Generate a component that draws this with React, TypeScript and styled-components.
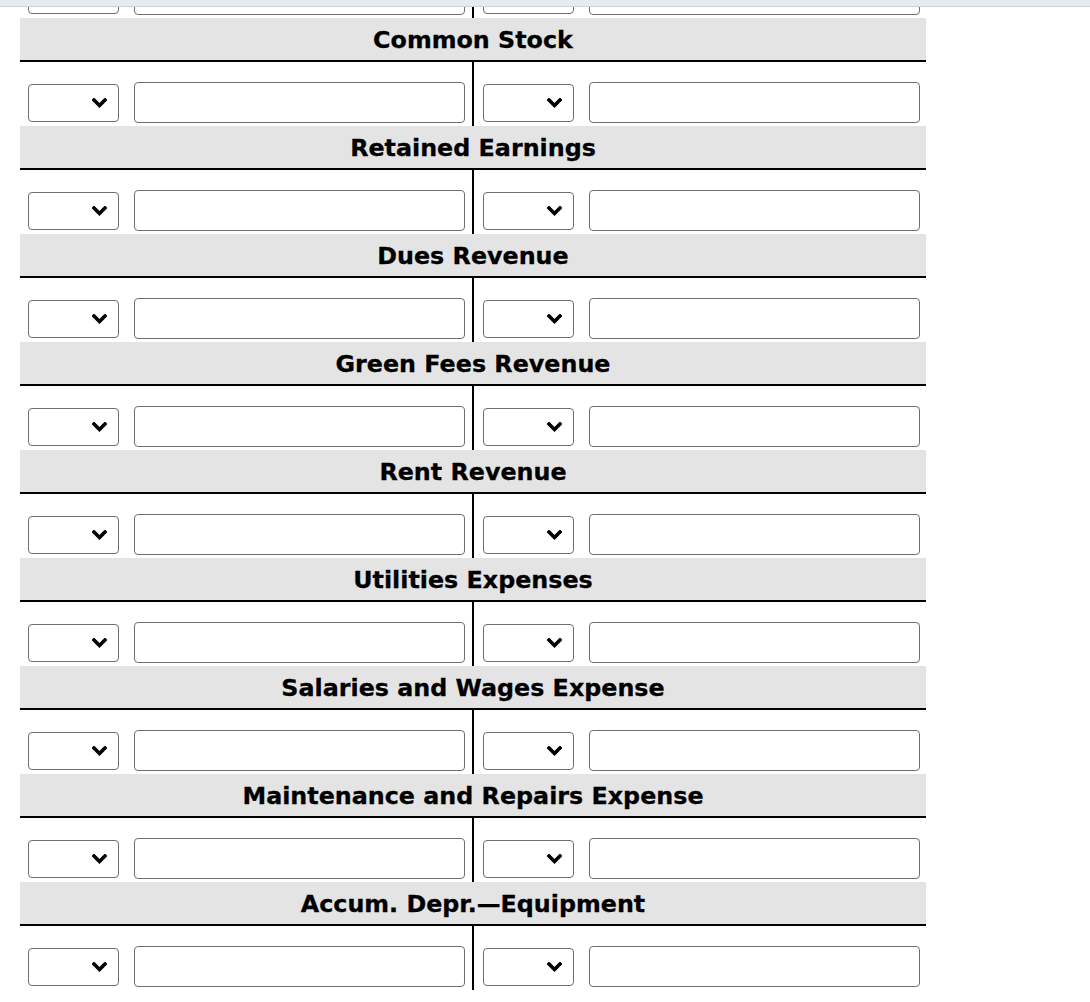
import React from "react";
import styled, { createGlobalStyle } from "styled-components";

const GlobalStyle = createGlobalStyle`
  html, body {
    margin: 0;
    padding: 0;
    background: #ffffff;
  }
  body {
    font-family: "DejaVu Sans", Verdana, sans-serif;
    color: #000;
  }
`;

const BrowserEdge = styled.div`
  position: fixed;
  top: 0;
  left: 0;
  right: 0;
  height: 6px;
  background: #e7eaee;
  border-bottom: 1px solid #cdd3da;
  z-index: 10;
`;

const Page = styled.div`
  width: 906px;
  padding-left: 20px;
  display: flex;
  flex-direction: column;
`;

const ClippedTop = styled.div`
  height: 18px;
  overflow: hidden;
  display: flex;
  flex-direction: column;
  justify-content: flex-end;
`;

const Header = styled.div`
  box-sizing: border-box;
  height: 44px;
  flex: 0 0 44px;
  background: #e4e4e4;
  border-bottom: 2px solid #000;
  display: flex;
  align-items: center;
  justify-content: center;
  font-family: "DejaVu Sans", Verdana, sans-serif;
  font-weight: bold;
  font-size: 23.8px;
  padding-top: 1px;
  white-space: nowrap;
  -webkit-text-stroke: 0.3px #000;
`;

const Row = styled.div`
  flex: 0 0 64px;
  height: 64px;
  display: flex;
`;

const Cell = styled.div<{ $left?: boolean }>`
  box-sizing: border-box;
  width: ${(p) => (p.$left ? "454px" : "452px")};
  height: 100%;
  display: flex;
  align-items: center;
  gap: 15px;
  padding: 20px 0 3px ${(p) => (p.$left ? "8px" : "9px")};
  border-right: ${(p) => (p.$left ? "2px solid #000" : "none")};
`;

const SelectWrap = styled.div`
  position: relative;
  width: 91px;
  height: 38px;
  flex: 0 0 91px;
`;

const Select = styled.select`
  appearance: none;
  -webkit-appearance: none;
  box-sizing: border-box;
  width: 100%;
  height: 100%;
  margin: 0;
  border: 1px solid #6e6e6e;
  border-radius: 4px;
  background: #fff;
  font-family: "DejaVu Sans", sans-serif;
  font-size: 14px;
  outline: none;
`;

const Chevron = styled.svg`
  position: absolute;
  right: 12px;
  top: 14px;
  pointer-events: none;
`;

const TextInput = styled.input`
  box-sizing: border-box;
  width: 331px;
  height: 41px;
  flex: 0 0 331px;
  margin: 0;
  border: 1px solid #6e6e6e;
  border-radius: 4px;
  background: #fff;
  font-family: "DejaVu Sans", sans-serif;
  font-size: 14px;
  outline: none;
`;

const Entry: React.FC = () => (
  <>
    <SelectWrap>
      <Select defaultValue="">
        <option value=""></option>
      </Select>
      <Chevron width="15" height="11" viewBox="0 0 15 11">
        <polyline
          points="2,2 7.5,7.5 13,2"
          fill="none"
          stroke="#000"
          strokeWidth="3.6"
          strokeLinecap="square"
        />
      </Chevron>
    </SelectWrap>
    <TextInput type="text" />
  </>
);

const EntryRow: React.FC = () => (
  <Row>
    <Cell $left>
      <Entry />
    </Cell>
    <Cell>
      <Entry />
    </Cell>
  </Row>
);

const accounts = [
  "Common Stock",
  "Retained Earnings",
  "Dues Revenue",
  "Green Fees Revenue",
  "Rent Revenue",
  "Utilities Expenses",
  "Salaries and Wages Expense",
  "Maintenance and Repairs Expense",
  "Accum. Depr.\u2014Equipment",
];

export default function App() {
  return (
    <>
      <GlobalStyle />
      <BrowserEdge />
      <Page>
        <ClippedTop>
          <EntryRow />
        </ClippedTop>
        {accounts.map((name) => (
          <React.Fragment key={name}>
            <Header>{name}</Header>
            <EntryRow />
          </React.Fragment>
        ))}
      </Page>
    </>
  );
}
